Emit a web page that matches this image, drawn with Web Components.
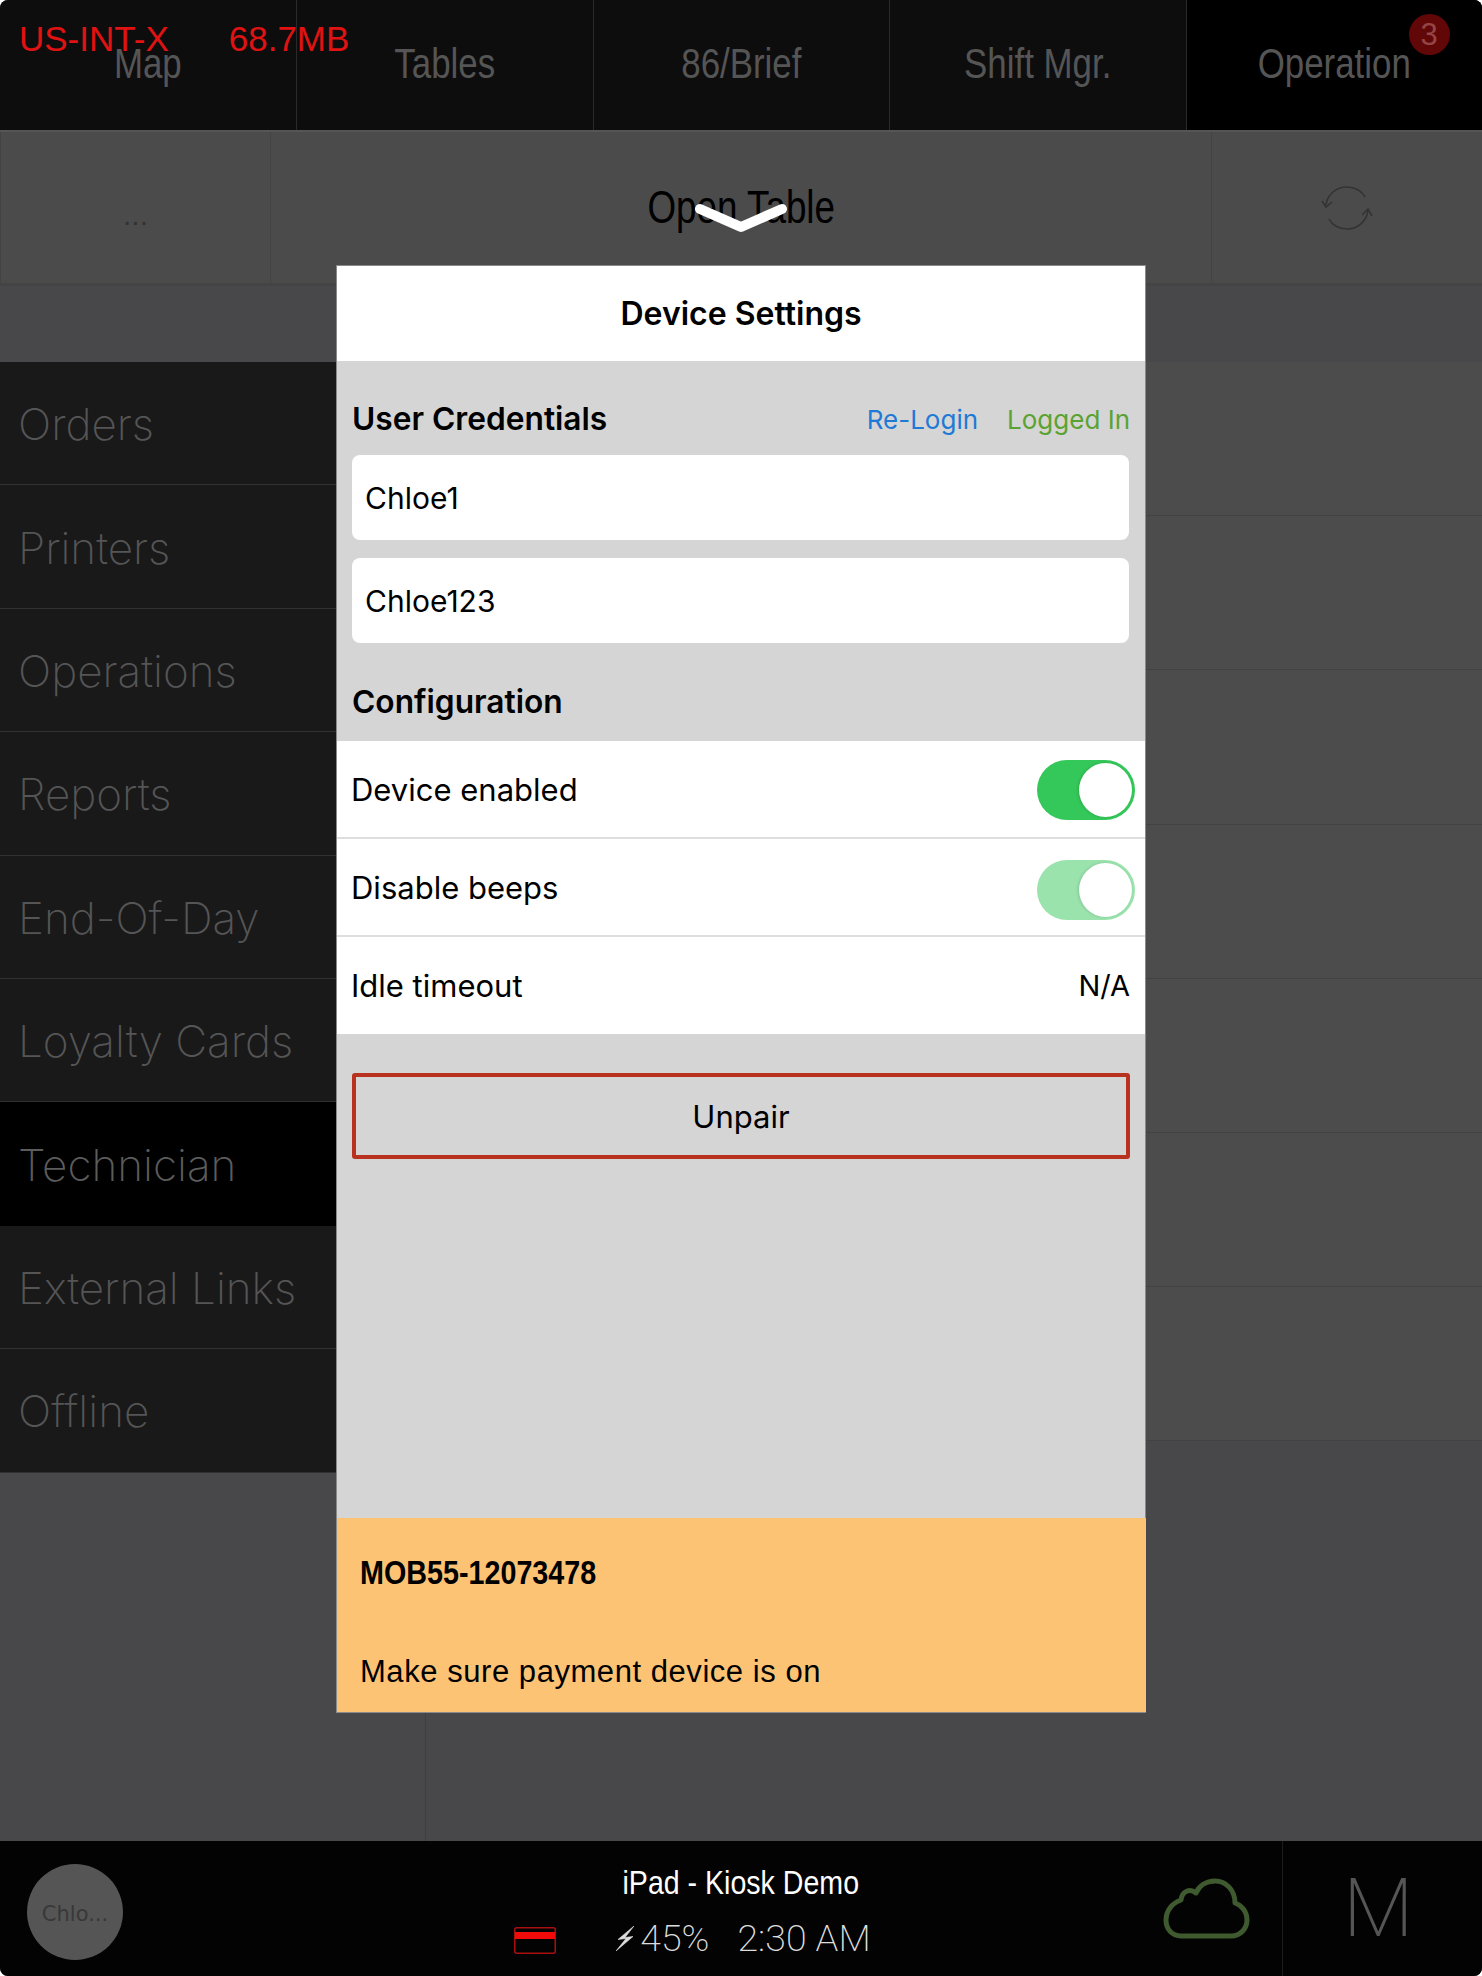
<!doctype html>
<html>
<head>
<meta charset="utf-8">
<title>Device Settings</title>
<style>
  html, body { margin: 0; padding: 0; background: #fff; }
  body { width: 1482px; height: 1976px; overflow: hidden; font-family: "Liberation Sans", sans-serif; }
</style>
</head>
<body>
<pos-screen>
  <top-nav slot="top">
    <nav-tab>Map</nav-tab>
    <nav-tab>Tables</nav-tab>
    <nav-tab>86/Brief</nav-tab>
    <nav-tab>Shift Mgr.</nav-tab>
    <nav-tab active badge="3">Operation</nav-tab>
  </top-nav>
  <tool-bar slot="top"></tool-bar>
  <side-menu slot="side">
    <menu-item>Orders</menu-item>
    <menu-item>Printers</menu-item>
    <menu-item>Operations</menu-item>
    <menu-item>Reports</menu-item>
    <menu-item>End-Of-Day</menu-item>
    <menu-item>Loyalty Cards</menu-item>
    <menu-item active>Technician</menu-item>
    <menu-item>External Links</menu-item>
    <menu-item>Offline</menu-item>
  </side-menu>
  <row-list slot="main" rows="7"></row-list>
  <status-bar slot="bottom"></status-bar>
  <debug-info slot="over"></debug-info>
  <device-settings slot="over"></device-settings>
</pos-screen>

<script>
class PosScreen extends HTMLElement {
  constructor() {
    super();
    this.attachShadow({ mode: 'open' });
    this.shadowRoot.innerHTML = `
      <style>
        :host { display: block; position: relative; width: 1482px; height: 1976px; overflow: hidden; border-radius: 8px; background: #48484a; }
        .wrap { display: flex; flex-direction: column; height: 100%; }
        .strip { height: 76px; background: #48484a; }
        .mid { flex: 1; display: flex; min-height: 0; }
      </style>
      <div class="wrap">
        <slot name="top"></slot>
        <div class="strip"></div>
        <div class="mid">
          <slot name="side"></slot>
          <slot name="main"></slot>
        </div>
        <slot name="bottom"></slot>
      </div>
      <slot name="over"></slot>
    `;
  }
}

class TopNav extends HTMLElement {
  constructor() {
    super();
    this.attachShadow({ mode: 'open' });
    this.shadowRoot.innerHTML = `
      <style>
        :host { display: grid; grid-template-columns: repeat(5, 1fr); height: 130px; background: #0d0d0e; }
      </style>
      <slot></slot>
    `;
  }
}

class NavTab extends HTMLElement {
  constructor() {
    super();
    this.attachShadow({ mode: 'open' });
    const badge = this.getAttribute('badge');
    this.shadowRoot.innerHTML = `
      <style>
        :host { display: flex; justify-content: center; padding-top: 39px; box-sizing: border-box; position: relative; height: 130px;
          font: 42px/50px "Liberation Sans", sans-serif; color: #555; border-left: 1px solid #2a2a2b; }
        :host(:first-of-type) { border-left: 0; }
        :host([active]) { background: #000; }
        .n { display: inline-block; transform: scaleX(.83); }
        .badge { position: absolute; left: 222px; top: 14px; width: 41px; height: 41px; border-radius: 50%; background: #620707;
          color: #954545; font: 31px/41px "Liberation Sans", sans-serif; text-align: center; }
      </style>
      <span class="n"><slot></slot></span>
      ${badge ? `<span class="badge">${badge}</span>` : ''}
    `;
  }
}

class ToolBar extends HTMLElement {
  constructor() {
    super();
    this.attachShadow({ mode: 'open' });
    this.shadowRoot.innerHTML = `
      <style>
        :host { display: flex; height: 156px; box-sizing: border-box; background: #4b4b4c; border-top: 2px solid #555; border-bottom: 3px solid #444445; }
        .dots { width: 271px; border-right: 1px solid #434344; border-left: 1px solid #434344; box-sizing: border-box; display: flex; align-items: center; justify-content: center;
          padding-top: 14px; color: #333; font: 30px "Liberation Sans", sans-serif; }
        .title { flex: 1; text-align: center; font: 46px/150px "Liberation Sans", sans-serif; color: #000; }
        .title span { display: inline-block; transform: scaleX(.8); }
        .sync { width: 271px; border-left: 1px solid #434344; box-sizing: border-box; display: flex; align-items: center; justify-content: center; }
        svg { width: 52px; height: 44px; }
      </style>
      <div class="dots">...</div>
      <div class="title"><span>Open Table</span></div>
      <div class="sync">
        <svg viewBox="0 0 52 44" fill="none" stroke="#333" stroke-width="1.6">
          <path d="M5 19 C6 9 15 1 26 1 C34 1 41 5 44 11"/>
          <path d="M1 15 L5 21 L11 16"/>
          <path d="M47 24 C46 35 37 43 26 43 C18 43 11 39 8 33"/>
          <path d="M41 29 L47 23 L51 30"/>
        </svg>
      </div>
    `;
  }
}

class SideMenu extends HTMLElement {
  constructor() {
    super();
    this.attachShadow({ mode: 'open' });
    this.shadowRoot.innerHTML = `
      <style>
        :host { display: block; width: 426px; box-sizing: border-box; border-right: 1px solid #3e3e40; flex: none; }
      </style>
      <slot></slot>
    `;
  }
}

class MenuItem extends HTMLElement {
  constructor() {
    super();
    this.attachShadow({ mode: 'open' });
    this.shadowRoot.innerHTML = `
      <style>
        :host { display: flex; align-items: center; height: 123.4px; box-sizing: border-box; padding: 2px 0 0 18px; background: #19191a;
          border-bottom: 1px solid #303031; font: 200 44px "Inter", sans-serif; color: #555; }
        :host([active]) { background: #000; color: #5c5c5c; border-bottom-color: #000; }
      </style>
      <slot></slot>
    `;
  }
}

class RowList extends HTMLElement {
  constructor() {
    super();
    this.attachShadow({ mode: 'open' });
    const count = Number(this.getAttribute('rows'));
    this.shadowRoot.innerHTML = `
      <style>
        :host { display: block; flex: 1; }
        div { height: 154.2px; box-sizing: border-box; background: #4c4c4d; border-bottom: 1px solid #424243; }
      </style>
      ${'<div></div>'.repeat(count)}
    `;
  }
}

class StatusBar extends HTMLElement {
  constructor() {
    super();
    this.attachShadow({ mode: 'open' });
    this.shadowRoot.innerHTML = `
      <style>
        :host { display: grid; grid-template-columns: 1fr 280px 1fr; height: 135px; background: #030303; color: #fff; }
        .left { display: flex; padding-left: 27px; justify-content: space-between; }
        .avatar { width: 96px; height: 96px; margin-top: 23px; border-radius: 50%; background: #555; color: #383838; font: 21px/100px "DejaVu Sans", sans-serif; text-align: center; }
        .card { width: 42px; height: 27px; margin-top: 86px; margin-right: 45px; }
        .center { display: flex; flex-direction: column; align-items: center; }
        .device { font: 34px/40px "Liberation Sans", sans-serif; margin-top: 21px; white-space: nowrap; transform: scaleX(.84); }
        .info { font: 200 37.5px/46px "Roboto", sans-serif; margin: 13px 0 0 5px; display: flex; gap: 28px; color: #ddd; }
        .bolt { flex: none; width: 18px; height: 25px; margin-right: 6px; align-self: center; }
        .batt { display: flex; }
        .right { display: flex; justify-content: flex-end; }
        .cloud { width: 88px; height: 62px; margin-top: 37px; margin-right: 31px; }
        .mode { width: 200px; box-sizing: border-box; border-left: 1px solid #1c1c1c; font: 200 82px/135px "Roboto", sans-serif; color: #555; padding-left: 60px; }
      </style>
      <div class="left">
        <div class="avatar">Chlo...</div>
        <svg class="card" viewBox="0 0 42 27">
          <rect x="0.75" y="0.75" width="40.5" height="25.5" rx="2" fill="none" stroke="#a81010" stroke-width="1.5"/>
          <rect x="1" y="5" width="40" height="7" fill="#f00a0a"/>
        </svg>
      </div>
      <div class="center">
        <div class="device">iPad - Kiosk Demo</div>
        <div class="info">
          <span class="batt">
            <svg class="bolt" viewBox="0 0 18 25"><path d="M18 0 L2 13.5 L10 12.5 L0 25 L17 10.5 L9 11.5 Z" fill="#ddd" stroke="#ddd" stroke-width=".6"/></svg>
            45%
          </span>
          <span>2:30 AM</span>
        </div>
      </div>
      <div class="right">
        <svg class="cloud" viewBox="0 0 88 62" fill="none" stroke="#3f5a2e" stroke-width="5" stroke-linejoin="round">
          <path d="M18 58 H68 C78 58 84 50 84 42 C84 33 78 27 72 25 C72 12 63 3 52 3 C43 3 36 8 33 15 C27 10 19 13 18 22 C9 25 3 33 3 42 C3 51 9 58 18 58 Z"/>
        </svg>
        <div class="mode">M</div>
      </div>
    `;
  }
}

class DebugInfo extends HTMLElement {
  constructor() {
    super();
    this.attachShadow({ mode: 'open' });
    this.shadowRoot.innerHTML = `
      <style>
        :host { position: absolute; left: 19px; top: 19px; display: flex; gap: 60px; font: 35px/40px "Liberation Sans", sans-serif; color: #e01212; }
      </style>
      <span>US-INT-X</span><span>68.7MB</span>
    `;
  }
}

class ToggleSwitch extends HTMLElement {
  constructor() {
    super();
    this.attachShadow({ mode: 'open' });
    this.shadowRoot.innerHTML = `
      <style>
        :host { display: block; position: relative; width: 98px; height: 60px; border-radius: 30px; background: #34c759; margin-top: 2px; }
        :host([dim]) { background: #9ae3ad; margin-top: 6px; }
        i { position: absolute; right: 3px; top: 3px; width: 53px; height: 54px; border-radius: 50%; background: #fff; box-shadow: -1px 0 3px rgba(0,0,0,.14); }
      </style>
      <i></i>
    `;
  }
}

class SettingRow extends HTMLElement {
  constructor() {
    super();
    this.attachShadow({ mode: 'open' });
    this.shadowRoot.innerHTML = `
      <style>
        :host { display: flex; align-items: center; justify-content: space-between; box-sizing: border-box; height: 98px; padding: 0 10px 0 14px;
          background: #fff; border-bottom: 2px solid #dedede; font: 31px "Inter", sans-serif; color: #000; }
        :host(:last-child) { border-bottom: 0; height: 97px; padding-right: 15px; }
      </style>
      <slot></slot>
    `;
  }
}

class DeviceSettings extends HTMLElement {
  constructor() {
    super();
    this.attachShadow({ mode: 'open' });
    this.shadowRoot.innerHTML = `
      <style>
        :host { position: absolute; left: 337px; top: 266px; width: 808px; height: 1446px; box-sizing: border-box; display: flex; flex-direction: column;
          background: #d5d5d5; font-family: "Inter", sans-serif; color: #000; box-shadow: 0 0 0 1px #8a8a8b; }
        .chev { position: absolute; left: 358px; top: -62px; width: 92px; height: 28px; overflow: visible; }
        header { height: 95px; background: #fff; display: flex; align-items: center; justify-content: center; font-size: 32px; font-weight: 600; }
        .head { display: flex; align-items: center; justify-content: space-between; padding: 0 15px; font-size: 31.7px; font-weight: 600; }
        .cred { height: 94px; padding-top: 20px; box-sizing: border-box; }
        .links { display: flex; gap: 29px; font-size: 26px; font-weight: 400; margin-top: 2px; }
        .blue { color: #1f7ad6; }
        .green { color: #5aa332; }
        .input { margin: 0 16px 18px 15px; height: 85px; border-radius: 8px; background: #fff; display: flex; align-items: center; padding-left: 13px; font-size: 30px; }
        .cfg { height: 79px; padding-top: 2px; margin-top: -1px; }
        .na { font-size: 29px; }
        .btn { margin: 39px 15px 0; height: 86px; box-sizing: border-box; border: 4px solid #b8321f; border-radius: 3px; display: flex; align-items: center; justify-content: center; font-size: 31px; }
        .spacer { flex: 1; }
        footer { height: 194px; margin: 0 -1px 0 0; background: #fdc374; color: #000; position: relative; }
        .code { font: bold 33px/40px "Liberation Sans", sans-serif; padding: 35px 0 0 23px; transform: scaleX(.87); transform-origin: 23px 0; }
        .hint { font: 31px/40px "Liberation Sans", sans-serif; letter-spacing: .55px; padding: 59px 0 0 23px; }
      </style>
      <svg class="chev" viewBox="0 0 92 28" fill="none" stroke="#fff" stroke-width="10" stroke-linecap="round" stroke-linejoin="round">
        <path d="M5 5 L46 23 L87 5"/>
      </svg>
      <header>Device Settings</header>
      <div class="head cred">
        <span>User Credentials</span>
        <span class="links"><span class="blue">Re-Login</span><span class="green">Logged In</span></span>
      </div>
      <div class="input">Chloe1</div>
      <div class="input">Chloe123</div>
      <div class="head cfg"><span>Configuration</span></div>
      <div class="rows">
        <setting-row><span>Device enabled</span><toggle-switch></toggle-switch></setting-row>
        <setting-row><span>Disable beeps</span><toggle-switch dim></toggle-switch></setting-row>
        <setting-row><span>Idle timeout</span><span class="na">N/A</span></setting-row>
      </div>
      <div class="btn">Unpair</div>
      <div class="spacer"></div>
      <footer>
        <div class="code">MOB55-12073478</div>
        <div class="hint">Make sure payment device is on</div>
      </footer>
    `;
  }
}

customElements.define('pos-screen', PosScreen);
customElements.define('top-nav', TopNav);
customElements.define('nav-tab', NavTab);
customElements.define('tool-bar', ToolBar);
customElements.define('side-menu', SideMenu);
customElements.define('menu-item', MenuItem);
customElements.define('row-list', RowList);
customElements.define('status-bar', StatusBar);
customElements.define('debug-info', DebugInfo);
customElements.define('toggle-switch', ToggleSwitch);
customElements.define('setting-row', SettingRow);
customElements.define('device-settings', DeviceSettings);
</script>
</body>
</html>
